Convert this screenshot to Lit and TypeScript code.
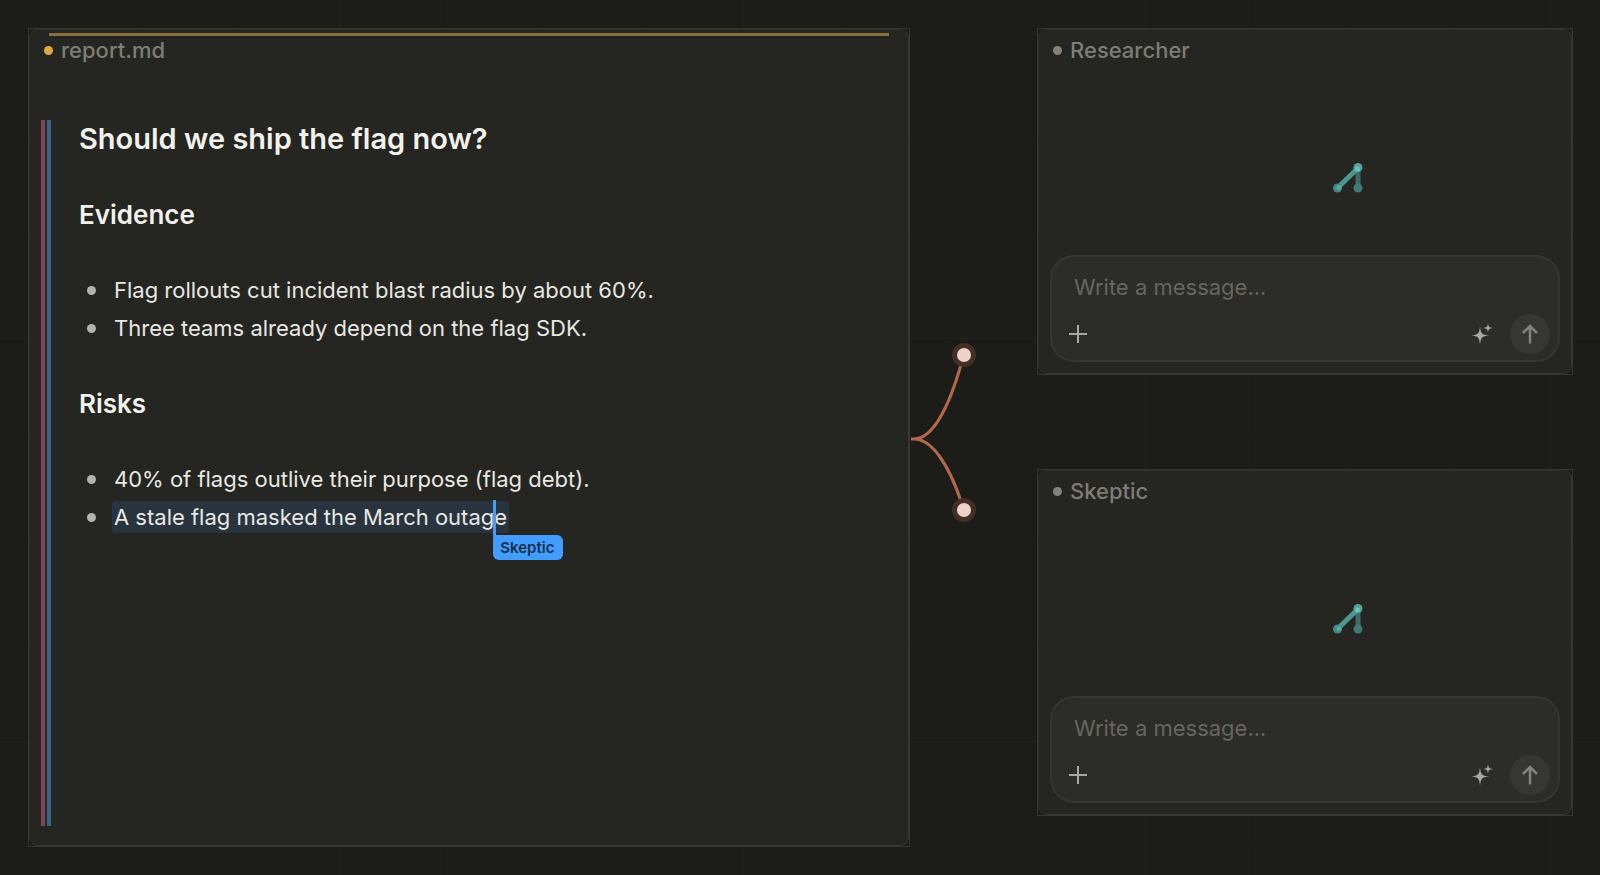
import { LitElement, html, css, svg } from "lit";
import { customElement, property } from "lit/decorators.js";

@customElement("canvas-card")
class CanvasCard extends LitElement {
  @property() label = "";
  @property({ type: Boolean, reflect: true }) active = false;

  static styles = css`
    :host {
      display: flex;
      box-sizing: border-box;
      border: 1px solid #353531;
      background: #1c1c18;
      min-width: 0;
    }
    .panel {
      position: relative;
      flex: 1;
      min-width: 0;
      display: flex;
      flex-direction: column;
      box-sizing: border-box;
      border: 1px solid #383834;
      border-top-color: #30302c;
      border-left-color: #2e2e2a;
      border-radius: 9px;
      background: #252521;
    }
    :host([active]) .panel::before {
      content: "";
      position: absolute;
      top: 3px;
      left: 19px;
      right: 19px;
      height: 3px;
      background: #8a6d3c;
    }
    .title {
      display: flex;
      align-items: center;
      gap: 8px;
      height: 28px;
      margin: 6px 14px 0;
      font-size: 22px;
      line-height: 28px;
      font-weight: 500;
      color: #7d7d78;
    }
    .dot {
      width: 9px;
      height: 9px;
      border-radius: 50%;
      background: #82827d;
    }
    :host([active]) .dot {
      background: #e0a845;
    }
    .body {
      flex: 1;
      display: flex;
      flex-direction: column;
      min-width: 0;
    }
  `;

  render() {
    return html`
      <section class="panel" aria-label=${this.label}>
        <header class="title"><span class="dot"></span><span>${this.label}</span></header>
        <div class="body"><slot></slot></div>
      </section>
    `;
  }
}

@customElement("report-document")
class ReportDocument extends LitElement {
  static styles = css`
    :host {
      flex: 1;
      display: flex;
      margin: 56px 20px 19px 11px;
      color: #e8e8e3;
      font-size: 22px;
      line-height: 38px;
    }
    .stripe {
      width: 4px;
      margin-right: 2px;
      background: #7f445a;
    }
    .stripe.blue {
      background: #386287;
      margin-right: 28px;
    }
    .text {
      flex: 1;
      min-width: 0;
    }
    h1,
    h2 {
      margin: 0;
      font-weight: 600;
      color: #f2f2ed;
    }
    h1 {
      font-size: 29px;
      line-height: 38px;
    }
    h2 {
      font-size: 26px;
      line-height: 38px;
      margin: 38px 0 37px;
    }
    ul {
      margin: 0;
      padding: 0;
      list-style: none;
    }
    li {
      display: flex;
      align-items: center;
      gap: 18px;
      min-height: 38px;
      padding-left: 8px;
    }
    li::before {
      content: "";
      flex: none;
      width: 9px;
      height: 9px;
      border-radius: 50%;
      background: #b3b3ac;
    }
    mark {
      display: block;
      height: 32px;
      line-height: 32px;
      margin-left: -2px;
      padding: 0 2px;
      border-radius: 3px;
      background: #29343e;
      color: inherit;
    }
    .caret {
      position: relative;
    }
    .caret::before {
      content: "";
      position: absolute;
      left: -1px;
      top: -4px;
      width: 3px;
      height: 36px;
      background: #429dff;
    }
    .who {
      position: absolute;
      left: -1px;
      top: 31px;
      padding: 0 9px 0 7px;
      border-radius: 2px 6px 6px 6px;
      background: #429dff;
      color: #14304d;
      font-size: 15px;
      line-height: 25px;
      font-weight: 600;
    }
  `;

  render() {
    return html`
      <span class="stripe"></span><span class="stripe blue"></span>
      <article class="text">
        <h1>Should we ship the flag now?</h1>
        <h2>Evidence</h2>
        <ul>
          <li><span>Flag rollouts cut incident blast radius by about 60%.</span></li>
          <li><span>Three teams already depend on the flag SDK.</span></li>
        </ul>
        <h2>Risks</h2>
        <ul>
          <li><span>40% of flags outlive their purpose (flag debt).</span></li>
          <li><mark>A stale flag masked the March outag<span class="caret"><span class="who">Skeptic</span></span>e</mark></li>
        </ul>
      </article>
    `;
  }
}

@customElement("agent-chat")
class AgentChat extends LitElement {
  @property() agent = "";

  static styles = css`
    :host {
      flex: 1;
      display: flex;
      flex-direction: column;
    }
    .idle {
      flex: 1;
      display: grid;
      place-items: center;
      min-height: 191px;
    }
    .idle svg {
      margin: 36px 0 0 86px;
    }
    .composer {
      display: flex;
      flex-direction: column;
      gap: 12px;
      margin: 0 11px 11px;
      padding: 15px 8px 6px 13px;
      border: 2px solid #353531;
      border-radius: 24px;
      background: #2c2c28;
    }
    textarea {
      display: block;
      box-sizing: border-box;
      width: 100%;
      height: 30px;
      margin: 0;
      padding: 0 9px;
      border: 0;
      outline: 0;
      resize: none;
      overflow: hidden;
      background: none;
      color: #e8e8e3;
      font: inherit;
      font-size: 22px;
      line-height: 30px;
    }
    textarea::placeholder {
      color: #666661;
      opacity: 1;
    }
    .bar {
      display: flex;
      align-items: center;
    }
    button {
      display: grid;
      place-items: center;
      padding: 0;
      border: 0;
      background: none;
      color: #a9a9a3;
      width: 26px;
      height: 40px;
    }
    .spark {
      margin-left: auto;
      margin-right: 15px;
    }
    .send {
      width: 40px;
      border-radius: 50%;
      background: #363632;
      color: #83837d;
    }
  `;

  render() {
    return html`
      <div class="idle">
        <svg width="32" height="32" viewBox="0 0 32 32" fill="none" aria-hidden="true">
          <path d="M26 6v20" stroke="#3b6c68" stroke-width="5"></path>
          <path d="M5.500 26 26 6" stroke="#4d9690" stroke-width="5"></path>
          <circle cx="26" cy="26" r="4.500" fill="#3f7a74"></circle>
          <circle cx="5.500" cy="26" r="4.500" fill="#458981"></circle>
          <circle cx="26" cy="5.500" r="4.500" fill="#55a29b"></circle>
          <circle cx="25.500" cy="7" r="2.500" fill="#64c3ba"></circle>
          <circle cx="7" cy="25.500" r="2.500" fill="#54aaa2"></circle>
        </svg>
      </div>
      <form class="composer" @submit=${(e: Event) => e.preventDefault()}>
        <textarea rows="1" placeholder="Write a message..." aria-label="Message to ${this.agent}"></textarea>
        <div class="bar">
          <button type="button" aria-label="Add attachment">
            <svg width="18" height="18" viewBox="0 0 18 18" stroke="currentColor" stroke-width="2">
              <path d="M9 0v18M0 9h18"></path>
            </svg>
          </button>
          <button class="spark" type="button" aria-label="Suggestions">
            <svg width="22" height="22" viewBox="0 0 22 22" fill="currentColor">
              <path d="M9 3C9.700 10.500 10.500 11.800 18.500 12.500 10.500 13.200 9.700 14.500 9 22 8.300 14.500 7.500 13.200 -.500 12.500 7.500 11.800 8.300 10.500 9 3Z"></path>
              <path d="M17 0C17.400 3.800 18 4.600 22 5 18 5.400 17.400 6.200 17 10 16.600 6.200 16 5.400 12 5 16 4.600 16.600 3.800 17 0Z"></path>
            </svg>
          </button>
          <button class="send" type="submit" aria-label="Send">
            <svg width="18" height="20" viewBox="0 0 18 20" fill="none" stroke="currentColor" stroke-width="2.500">
              <path d="M9 19.500V2M2 9l7-7 7 7"></path>
            </svg>
          </button>
        </div>
      </form>
    `;
  }
}

@customElement("app-root")
class AppRoot extends LitElement {
  static styles = css`
    :host {
      display: block;
      font-family: Inter, "Liberation Sans", sans-serif;
    }
    .canvas {
      box-sizing: border-box;
      min-height: 100vh;
      display: grid;
      grid-template-columns: 882fr 127px 536fr;
      padding: 28px 27px 28px 28px;
      background-color: #1c1c18;
      background-image: linear-gradient(90deg, #21211d 1px, transparent 1px),
        linear-gradient(#21211d 1px, transparent 1px), linear-gradient(90deg, #1e1e1a 1px, transparent 1px),
        linear-gradient(#1e1e1a 1px, transparent 1px);
      background-size: 403px 403px, 403px 403px, 101px 101px, 101px 101px;
      background-position: 339px 338px, 339px 338px, 36px 35px, 36px 35px;
    }
    .agents {
      display: flex;
      flex-direction: column;
      gap: 94px;
      min-width: 0;
    }
    .links {
      align-self: center;
      display: block;
      margin-top: -9px;
    }
  `;

  private end(cy: number) {
    return svg`
      <circle cx="54" cy=${cy} r="12" fill="#452e25"></circle>
      <circle cx="54" cy=${cy} r="7" fill="#ecd2c8"></circle>`;
  }

  render() {
    return html`
      <main class="canvas">
        <canvas-card label="report.md" active><report-document></report-document></canvas-card>
        <svg class="links" width="127" height="182" viewBox="0 0 127 182" fill="none" aria-hidden="true">
          <path
            d="M1 97H4C21 97 38 70 52 19M4 97C21 97 38 120 52 162"
            stroke="#b5674b"
            stroke-width="3"
          ></path>
          ${this.end(13)} ${this.end(168)}
        </svg>
        <div class="agents">
          <canvas-card label="Researcher"><agent-chat agent="Researcher"></agent-chat></canvas-card>
          <canvas-card label="Skeptic"><agent-chat agent="Skeptic"></agent-chat></canvas-card>
        </div>
      </main>
    `;
  }
}
